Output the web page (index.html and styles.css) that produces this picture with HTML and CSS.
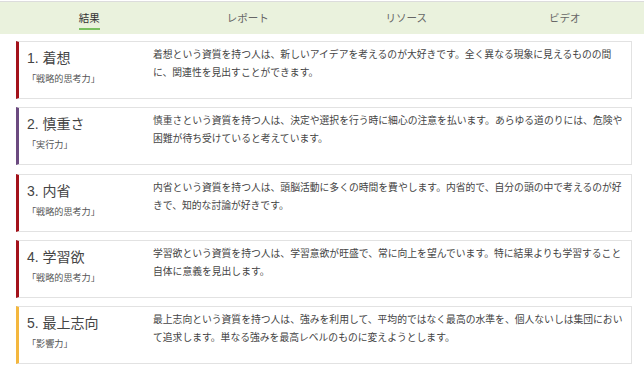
FILE: index.html
```html
<!DOCTYPE html>
<html lang="ja">
  <head>
    <meta charset="utf-8">
    <title>結果</title>
    <link rel="stylesheet" href="styles.css">
  </head>
  <body>
    <nav class="tabs">
      <div class="tab active"><span>結果</span></div>
      <div class="tab"><span>レポート</span></div>
      <div class="tab"><span>リソース</span></div>
      <div class="tab"><span>ビデオ</span></div>
    </nav>

    <div class="list">
      <div class="card strategic">
        <div class="rank">
          <div class="title">1. 着想</div>
          <div class="domain">「戦略的思考力」</div>
        </div>
        <div class="desc">着想という資質を持つ人は、新しいアイデアを考えるのが大好きです。全く異なる現象に見えるものの間に、関連性を見出すことができます。</div>
      </div>
      <div class="card executing">
        <div class="rank">
          <div class="title">2. 慎重さ</div>
          <div class="domain">「実行力」</div>
        </div>
        <div class="desc">慎重さという資質を持つ人は、決定や選択を行う時に細心の注意を払います。あらゆる道のりには、危険や困難が待ち受けていると考えています。</div>
      </div>
      <div class="card strategic">
        <div class="rank">
          <div class="title">3. 内省</div>
          <div class="domain">「戦略的思考力」</div>
        </div>
        <div class="desc">内省という資質を持つ人は、頭脳活動に多くの時間を費やします。内省的で、自分の頭の中で考えるのが好きで、知的な討論が好きです。</div>
      </div>
      <div class="card strategic">
        <div class="rank">
          <div class="title">4. 学習欲</div>
          <div class="domain">「戦略的思考力」</div>
        </div>
        <div class="desc">学習欲という資質を持つ人は、学習意欲が旺盛で、常に向上を望んでいます。特に結果よりも学習すること自体に意義を見出します。</div>
      </div>
      <div class="card influencing">
        <div class="rank">
          <div class="title">5. 最上志向</div>
          <div class="domain">「影響力」</div>
        </div>
        <div class="desc">最上志向という資質を持つ人は、強みを利用して、平均的ではなく最高の水準を、個人ないしは集団において追求します。単なる強みを最高レベルのものに変えようとします。</div>
      </div>
    </div>
  </body>
</html>
```

FILE: styles.css
```css
body{
  margin:0;
  padding-top:1px;
  background-color: white;
  font-family: "Liberation Sans", "Noto Sans CJK JP", sans-serif;
  color:#333;
}

/* top tab bar */
.tabs{
  display:flex;
  padding-left:10px;
  height:32px;
  border-top:1px solid #dcdcdc;
  background-color:#eaf2dd;
}
.tab{
  flex:1;
  display:flex;
  justify-content:center;
  align-items:center;
  font-size:10.5px;
  color:#666;
}
.tab span{
  padding-top:4px;
  padding-bottom:3px;
  border-bottom:2px solid transparent;
}
.tab.active span{
  color:#333;
  border-bottom-color:#78c060;
}

/* strength cards */
.list{
  padding:7px 12px 0 16px;
}
.card{
  display:flex;
  box-sizing:border-box;
  height:58px;
  margin-bottom:8.25px;
  border:1px solid #e2e2e2;
  border-left:3px solid #ccc;
}
.card.strategic{
  border-left-color:#a3121b;
}
.card.executing{
  border-left-color:#6b4a80;
}
.card.influencing{
  border-left-color:#f4b73e;
}
.rank{
  width:126px;
  padding:6px 0 0 8px;
  flex-shrink:0;
}
.title{
  font-size:14px;
  line-height:20px;
  color:#444;
}
.domain{
  margin-top:4px;
  font-size:9.1px;
  line-height:14px;
  color:#555;
}
.desc{
  flex:1;
  padding:4px 4px 0 0;
  font-size:9.8px;
  line-height:18px;
  color:#444;
}
```
